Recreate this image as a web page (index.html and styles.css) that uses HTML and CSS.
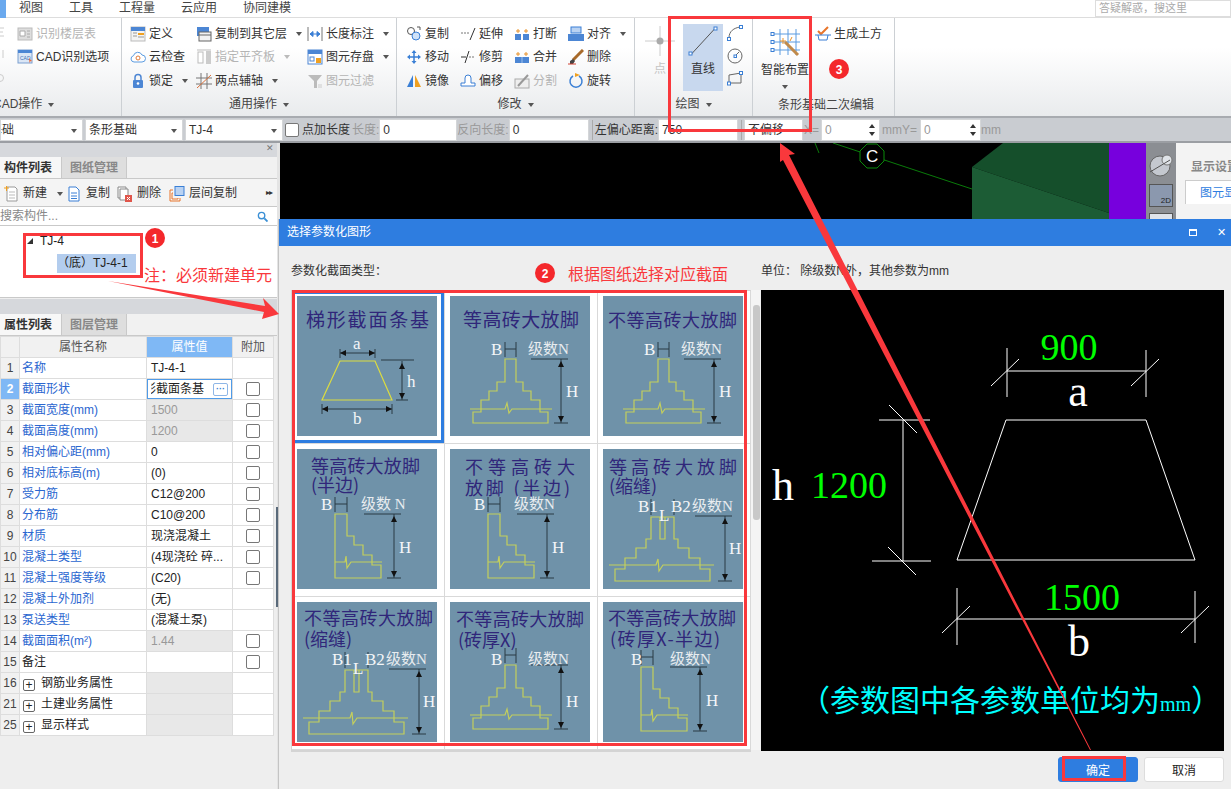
FILE: index.html
```html
<!DOCTYPE html>
<html lang="zh">
<head>
<meta charset="utf-8">
<title>选择参数化图形</title>
<link rel="stylesheet" href="styles.css">
</head>
<body>
<svg class="defs" aria-hidden="true">
  <symbol id="full" viewBox="0 0 140 140">
    <path class="yl" d="M55 63H66V86H73V95H81V104H90V116H98V127H23V116H31V104H39V95H47V86H55Z"/>
    <path class="yl" d="M20 113H55L57 107L59 117L62 113H102"/>
    <path class="dk" d="M55 46V61M66 46V61M55 53H66M81 63H118M111 63V127M104 127H118"/>
    <path class="ar" d="M111 65l-3 6h6zM111 126l-3-6h6z"/>
  </symbol>
  <symbol id="half" viewBox="0 0 140 140">
    <path class="yl" d="M38 65H50V87H57V96H66V106H75V116H84V129H38Z"/>
    <path class="yl" d="M38 113H48L49 107L50 119L54 113H85"/>
    <path class="dk" d="M38 48V63M50 48V63M38 55H50M67 65H104M97 65V129M90 129H104"/>
    <path class="ar" d="M97 67l-3 6h6zM97 128l-3-6h6z"/>
  </symbol>
  <symbol id="joint" viewBox="0 0 140 140">
    <path class="yl" d="M48 68H71V90H75V99H86V109H97V120H107V132H12V120H22V109H33V99H43V90H48Z"/>
    <path class="yl" d="M57 68V90H62V68M6 116H53L55 110L56 122L60 116H111"/>
    <path class="dk" d="M48 50V66M71 50V66M92 67H129M122 67V132M115 132H129"/>
    <path class="ar" d="M122 69l-3 6h6zM122 131l-3-6h6zM55 72l-6 0M64 72h6"/>
  </symbol>
</svg>

<div class="app">
  <nav class="menu">
    <span class="menu-end"></span>
    <span class="m">视图</span><span class="m">工具</span><span class="m">工程量</span><span class="m">云应用</span><span class="m">协同建模</span>
    <span class="help">答疑解惑，搜这里</span>
  </nav>

  <section class="ribbon">
    <div class="grp g1">
      <svg class="edge" viewBox="0 0 5 60"><path d="M0 6h4M0 10h3M0 14h4M3 28v8" stroke="#ccc" fill="none"/><circle cx="0" cy="56" r="3.500" fill="none" stroke="#ccc"/></svg>
      <div class="rows r-cad">
        <div class="it dis"><svg class="i" viewBox="0 0 16 16"><rect x="1" y="2" width="14" height="12" fill="#ddd" stroke="#bbb"/><path d="M3 5h5v5H3zM10 5h3M10 8h3M10 11h3" stroke="#aaa" fill="#fff"/></svg>识别楼层表</div>
        <div class="it"><svg class="i" viewBox="0 0 16 16"><rect x="1" y="1" width="14" height="13" fill="#dbe6f5" stroke="#7a9fd0"/><rect x="1" y="1" width="14" height="3" fill="#4c86d4"/><text class="tiny" x="3" y="11">CAD</text><path d="M12 9l3 3-2 .5-.5 2z" fill="#e96a3a"/></svg>CAD识别选项</div>
      </div>
      <div class="glabel lab-cad">CAD操作<i class="tri"></i></div>
    </div>

    <div class="grp g2">
      <div class="cols">
        <div class="rows w66">
          <div class="it"><svg class="i" viewBox="0 0 16 16"><rect x="1" y="1" width="14" height="14" fill="#f4f4f4" stroke="#bbb"/><rect x="1" y="1" width="14" height="4" fill="#4c86d4"/><path d="M8 7h6v2H8z" fill="#f0a020"/><path d="M3 7h4M3 10h4M8 11h6" stroke="#999"/></svg>定义</div>
          <div class="it"><svg class="i" viewBox="0 0 16 16"><path d="M4 13a3.200 3.200 0 0 1-.5-6.300A4.500 4.500 0 0 1 12 6a3.500 3.500 0 0 1 0 7z" fill="#fff" stroke="#5b9be0"/><circle cx="8" cy="9" r="2" fill="none" stroke="#e07a3a"/></svg>云检查</div>
          <div class="it"><svg class="i" viewBox="0 0 16 16"><path d="M5 7V4.500a3 3 0 0 1 6 0V7" fill="none" stroke="#4c86d4" stroke-width="1.500"/><rect x="3" y="7" width="10" height="8" rx="1" fill="#4c86d4"/><circle cx="8" cy="10.500" r="1.300" fill="#fff"/></svg>锁定<i class="tri"></i></div>
        </div>
        <div class="rows w111">
          <div class="it"><svg class="i" viewBox="0 0 16 16"><rect x="1" y="1" width="12" height="9" fill="#4c86d4"/><rect x="3" y="6" width="12" height="9" fill="#f2f2f2" stroke="#666"/><path d="M3 9h12" stroke="#666"/></svg>复制到其它层<i class="tri"></i></div>
          <div class="it dis"><svg class="i" viewBox="0 0 16 16"><path d="M1 1h14" stroke="#bbb"/><rect x="2" y="3" width="5" height="11" fill="#fff" stroke="#bbb"/><rect x="10" y="2" width="5" height="13" fill="#ccc"/></svg>指定平齐板<i class="tri lt"></i></div>
          <div class="it"><svg class="i" viewBox="0 0 16 16"><path d="M0 5h16M0 11h16M5 0v16M11 0v16" stroke="#777" fill="none"/><path d="M1 15L15 2" stroke="#d9703a"/></svg>两点辅轴<i class="tri"></i></div>
        </div>
        <div class="rows">
          <div class="it"><svg class="i" viewBox="0 0 16 16"><path d="M1 1v14M15 1v14" stroke="#777"/><path d="M3 8h10M3 8l3-2.500v5zM13 8l-3-2.500v5z" stroke="#3a7fd5" fill="#3a7fd5"/></svg>长度标注<i class="tri"></i></div>
          <div class="it"><svg class="i" viewBox="0 0 16 16"><rect x="1" y="1" width="14" height="14" fill="#fff" stroke="#4c86d4"/><rect x="1" y="1" width="14" height="4" fill="#4c86d4"/><rect x="3" y="8" width="4" height="4" fill="none" stroke="#4c86d4"/><rect x="9" y="9" width="5" height="5" fill="#f0a020"/></svg>图元存盘<i class="tri"></i></div>
          <div class="it dis"><svg class="i" viewBox="0 0 16 16"><path d="M1 2h14L10 8v7H7V8z" fill="#bbb"/><path d="M11 12h4M11 14h4" stroke="#ccc"/></svg>图元过滤</div>
        </div>
      </div>
      <div class="glabel">通用操作<i class="tri"></i></div>
    </div>

    <div class="grp g3">
      <div class="cols">
        <div class="rows w54">
          <div class="it"><svg class="i" viewBox="0 0 16 16"><circle cx="5" cy="5" r="3.500" fill="#fff" stroke="#555"/><circle cx="10" cy="10" r="4" fill="#cfe2f8" stroke="#3a7fd5"/><path d="M11 1h3v3" fill="none" stroke="#555"/></svg>复制</div>
          <div class="it"><svg class="i" viewBox="0 0 16 16"><path d="M8 1l2.500 3h-5zM8 15l2.500-3h-5zM1 8l3-2.500v5zM15 8l-3-2.500v5z" fill="#3a7fd5"/><path d="M8 4v8M4 8h8" stroke="#3a7fd5" stroke-width="1.500"/></svg>移动</div>
          <div class="it"><svg class="i" viewBox="0 0 16 16"><path d="M7 2v12H1z" fill="#3a7fd5"/><path d="M9 2v12h6z" fill="#f0a020"/></svg>镜像</div>
        </div>
        <div class="rows w54">
          <div class="it"><svg class="i" viewBox="0 0 16 16"><path d="M1 7h8" stroke="#777" stroke-dasharray="2 1"/><path d="M10 14L15 2" stroke="#333"/></svg>延伸</div>
          <div class="it"><svg class="i" viewBox="0 0 16 16"><path d="M1 8h5" stroke="#333"/><path d="M9 8h6" stroke="#777" stroke-dasharray="2 1"/><path d="M5 14L9 2" stroke="#333"/></svg>修剪</div>
          <div class="it"><svg class="i" viewBox="0 0 16 16"><path d="M1 13V10h4V5a3 3 0 0 1 6 0v5h4v3z" fill="#fff" stroke="#3a7fd5"/></svg>偏移</div>
        </div>
        <div class="rows w54">
          <div class="it"><svg class="i" viewBox="0 0 16 16"><rect x="1" y="8" width="6" height="6" fill="#4c86d4"/><rect x="9" y="8" width="6" height="6" fill="#4c86d4"/><path d="M2 5h4M4 3v4M10 5h4M12 3v4" stroke="#e8922a"/></svg>打断</div>
          <div class="it"><svg class="i" viewBox="0 0 16 16"><rect x="1" y="8" width="14" height="6" fill="#4c86d4"/><path d="M8 8v6" stroke="#9cc0ec"/><path d="M2 5h4M4 3v4M10 5h4M12 3v4" stroke="#e8922a"/></svg>合并</div>
          <div class="it dis"><svg class="i" viewBox="0 0 16 16"><rect x="1" y="6" width="14" height="9" fill="#eee" stroke="#aaa"/><path d="M4 13L14 2" stroke="#999" stroke-width="2"/></svg>分割</div>
        </div>
        <div class="rows">
          <div class="it"><svg class="i" viewBox="0 0 16 16"><rect x="3" y="1" width="10" height="6" fill="#b9d2f2" stroke="#3a7fd5"/><rect x="0" y="8" width="16" height="7" fill="#4c86d4"/></svg>对齐<i class="tri"></i></div>
          <div class="it"><svg class="i" viewBox="0 0 16 16"><path d="M15 1L5 11" stroke="#a86a2a" stroke-width="3"/><path d="M2 12l3-2 2 2-2 3H2z" fill="#444"/><path d="M0 15h8" stroke="#d04030"/></svg>删除</div>
          <div class="it"><svg class="i" viewBox="0 0 16 16"><path d="M5 3a6 6 0 1 0 6 0" fill="none" stroke="#3a7fd5" stroke-width="1.500"/><path d="M7 0l5 2-5 2z" fill="#f0a020"/></svg>旋转</div>
        </div>
      </div>
      <div class="glabel">修改<i class="tri"></i></div>
    </div>

    <div class="grp g4">
      <div class="draw">
        <div class="big pt"><svg class="bi" viewBox="0 0 30 30"><path d="M0 15h30M15 0v30" stroke="#ccc"/><circle cx="15" cy="15" r="3.500" fill="#aaa"/></svg><span>点</span></div>
        <div class="big line"><svg class="bi" viewBox="0 0 30 30"><path d="M3.500 28L26.500 3" stroke="#555"/><rect x="1" y="26" width="3" height="3" fill="#fff" stroke="#3a7fd5"/><rect x="26" y="1" width="3" height="3" fill="#fff" stroke="#3a7fd5"/></svg><span>直线</span></div>
        <div class="small">
          <svg class="i" viewBox="0 0 16 16"><path d="M2 13C2 6 7 3 13 2" fill="none" stroke="#666"/><rect x="0.500" y="12.500" width="3" height="3" fill="#fff" stroke="#3a7fd5"/><rect x="12.500" y="0.500" width="3" height="3" fill="#fff" stroke="#3a7fd5"/></svg>
          <svg class="i" viewBox="0 0 16 16"><circle cx="8" cy="8" r="7" fill="none" stroke="#666"/><path d="M8 8l4-4" stroke="#666"/><rect x="7" y="7" width="2.500" height="2.500" fill="#fff" stroke="#3a7fd5"/></svg>
          <svg class="i" viewBox="0 0 16 16"><path d="M2 5L14 3V13H2Z" fill="none" stroke="#666"/><rect x="0.500" y="12" width="3" height="3" fill="#fff" stroke="#3a7fd5"/><rect x="12.500" y="1.500" width="3" height="3" fill="#fff" stroke="#3a7fd5"/></svg>
        </div>
      </div>
      <div class="glabel">绘图<i class="tri"></i></div>
    </div>

    <div class="grp g5">
      <div class="smart">
        <div class="big sm"><svg class="bi" viewBox="0 0 30 30"><path d="M4 5h26M4 13h26M4 21h26M10 0v26M18 0v26M26 0v26" stroke="#5b9be0" fill="none"/><path d="M15 13l13 13" stroke="#c08a4a" stroke-width="3"/><path d="M13 9v6M10 12h6M22 8l-2 4" stroke="#e8922a"/><rect x="1" y="3.500" width="3" height="3" fill="#fff" stroke="#3a7fd5"/><rect x="1" y="11.500" width="3" height="3" fill="#fff" stroke="#3a7fd5"/><rect x="1" y="19.500" width="3" height="3" fill="#fff" stroke="#3a7fd5"/></svg><span>智能布置</span><i class="tri"></i></div>
        <div class="it earth"><svg class="i" viewBox="0 0 16 16"><path d="M3 5l3 3 7-7" fill="none" stroke="#e8752a" stroke-width="2"/><path d="M0 9h16M3 9l1 5h8l1-5" fill="none" stroke="#3a7fd5"/></svg>生成土方</div>
      </div>
      <div class="glabel lab-strip">条形基础二次编辑</div>
    </div>
  </section>

  <section class="tool">
    <div class="sel s83 cut">基础<i class="tri"></i></div>
    <div class="sel s98">条形基础<i class="tri"></i></div>
    <div class="sel s98">TJ-4<i class="tri"></i></div>
    <span class="cb cb-tool"></span><span class="tl">点加长度</span>
    <span class="tl gray">长度:</span><div class="inp w78">0</div>
    <span class="tl gray">反向长度:</span><div class="inp w80">0</div>
    <span class="sep"></span>
    <span class="tl">左偏心距离:</span><div class="inp w79">750</div>
    <span class="sep"></span>
    <div class="inp w59">不偏移</div>
    <span class="tl gray lx">X=</span><div class="inp w59 gray">0<b class="sp"></b></div>
    <span class="tl gray ly">mmY=</span><div class="inp w61 gray">0<b class="sp"></b></div>
    <span class="tl gray">mm</span>
  </section>

  <main class="main">
    <aside class="left">
      <div class="strip"><span class="x">✕</span></div>
      <div class="tabs"><span class="tab on">构件列表</span><span class="tab">图纸管理</span></div>
      <div class="ltools">
        <span class="lt lt1"><svg class="i" viewBox="0 0 16 16"><path d="M4 1h8l2 2v12H4z" fill="#fff" stroke="#999"/><path d="M6 6h6M6 9h6M6 12h6" stroke="#bbb"/><path d="M1 2h5M3.500 0v5" stroke="#f0a020"/></svg>新建<i class="tri"></i></span>
        <span class="lt lt2"><svg class="i" viewBox="0 0 16 16"><path d="M3 1h7l3 3v11H3z" fill="#fff" stroke="#3a7fd5"/><path d="M5 7h6M5 10h6M5 12.500h6" stroke="#3a7fd5"/></svg>复制</span>
        <span class="lt lt3"><svg class="i" viewBox="0 0 16 16"><path d="M1 1h8v11H1z" fill="#fff" stroke="#888"/><path d="M3 3h8v11H3z" fill="#fff" stroke="#888"/><rect x="8" y="9" width="7" height="7" fill="#e0554a"/><path d="M10 11l3 3M13 11l-3 3" stroke="#fff"/></svg>删除</span>
        <span class="lt lt4"><svg class="i" viewBox="0 0 16 16"><rect x="6" y="0.500" width="9" height="9" fill="#b9d2f2" stroke="#3a7fd5"/><path d="M4 4H1v11h10v-3M4 7H3v6h6v-1" fill="none" stroke="#e8752a"/></svg>层间复制</span>
        <span class="more">▸▸</span>
      </div>
      <div class="search">搜索构件...<svg class="mag" viewBox="0 0 12 12"><circle cx="5" cy="5" r="3.500" fill="none" stroke="#3a8fd5" stroke-width="1.500"/><path d="M8 8l3.500 3.500" stroke="#3a8fd5" stroke-width="2"/></svg></div>
      <div class="tree">
        <div class="tn1"><i class="twist"></i>TJ-4</div>
        <div class="tn2">（底）TJ-4-1</div>
      </div>
      <div class="strip s2"></div>
      <div class="tabs"><span class="tab on">属性列表</span><span class="tab">图层管理</span></div>
      <table class="props">
        <colgroup><col class="c0"><col class="c1"><col class="c2"><col class="c3"></colgroup>
        <thead><tr><th></th><th>属性名称</th><th class="hv">属性值</th><th>附加</th></tr></thead>
        <tbody>
          <tr><td class="n">1</td><td class="b">名称</td><td class="v">TJ-4-1</td><td></td></tr>
          <tr><td class="n act">2</td><td class="b">截面形状</td><td class="v edit"><span class="clip">形截面条基</span><b class="dots">···</b></td><td><span class="cb"></span></td></tr>
          <tr><td class="n">3</td><td class="b">截面宽度(mm)</td><td class="v ro">1500</td><td><span class="cb"></span></td></tr>
          <tr><td class="n">4</td><td class="b">截面高度(mm)</td><td class="v ro">1200</td><td><span class="cb"></span></td></tr>
          <tr><td class="n">5</td><td class="b">相对偏心距(mm)</td><td class="v">0</td><td><span class="cb"></span></td></tr>
          <tr><td class="n">6</td><td class="b">相对底标高(m)</td><td class="v">(0)</td><td><span class="cb"></span></td></tr>
          <tr><td class="n">7</td><td class="b">受力筋</td><td class="v">C12@200</td><td><span class="cb"></span></td></tr>
          <tr><td class="n">8</td><td class="b">分布筋</td><td class="v">C10@200</td><td><span class="cb"></span></td></tr>
          <tr><td class="n">9</td><td class="b">材质</td><td class="v">现浇混凝土</td><td><span class="cb"></span></td></tr>
          <tr><td class="n">10</td><td class="b">混凝土类型</td><td class="v">(4现浇砼 碎...</td><td><span class="cb"></span></td></tr>
          <tr><td class="n">11</td><td class="b">混凝土强度等级</td><td class="v">(C20)</td><td><span class="cb"></span></td></tr>
          <tr><td class="n">12</td><td class="b">混凝土外加剂</td><td class="v">(无)</td><td></td></tr>
          <tr><td class="n">13</td><td class="b">泵送类型</td><td class="v">(混凝土泵)</td><td></td></tr>
          <tr><td class="n">14</td><td class="b">截面面积(m²)</td><td class="v ro">1.44</td><td><span class="cb"></span></td></tr>
          <tr><td class="n">15</td><td>备注</td><td class="v"></td><td><span class="cb"></span></td></tr>
          <tr><td class="n">16</td><td><span class="plus">+</span>钢筋业务属性</td><td class="v ro"></td><td></td></tr>
          <tr><td class="n">21</td><td><span class="plus">+</span>土建业务属性</td><td class="v ro"></td><td></td></tr>
          <tr><td class="n">25</td><td><span class="plus">+</span>显示样式</td><td class="v ro"></td><td></td></tr>
        </tbody>
      </table>
      <i class="thumb"></i>
    </aside>
    <div class="canvas">
      <svg class="scene" viewBox="0 0 866 76" preserveAspectRatio="none">
        <path d="M535 0L539 10M553 0L692 46" stroke="#0a7a0a" fill="none"/>
        <path d="M692 24L723 0H829V70Z" fill="#154f2b"/>
        <path d="M692 24L829 70V76H692Z" fill="#1c5c35"/>
        <rect x="829" width="37" height="76" fill="#7700dd"/>
        <path d="M587 1h10l7 7v10l-7 7h-10l-7-7V8z" fill="#000" stroke="#0a8a0a"/>
        <text class="c-label" x="586" y="19">C</text>
      </svg>
      <div class="vbar">
        <svg class="globe" viewBox="0 0 26 26"><circle cx="12" cy="14" r="10" fill="#c4c8cf" stroke="#666"/><circle cx="19" cy="8" r="5" fill="#dfe3e8" stroke="#777"/><path d="M2 20L22 8" stroke="#555"/></svg>
        <div class="d2">2D</div>
        <div class="d3"></div>
      </div>
      <div class="side">
        <div class="side-h">显示设置</div>
        <div class="side-t">图元显</div>
      </div>
    </div>
  </main>
</div>

<div class="dialog">
  <header class="dtitle"><span>选择参数化图形</span><span class="dctl"><i class="maxi"></i><b class="cl">✕</b></span></header>
  <div class="dbody">
    <div class="dleft">
      <div class="dcap">参数化截面类型：</div>
      <div class="cardwrap">
        <div class="cards">
          <div class="cell sel-c"><svg class="card" viewBox="0 0 140 140">
            <text class="t" x="9" y="31" textLength="123">梯形截面条基</text>
            <path class="yl first" d="M43 65H78L95 104H25Z"/>
            <path class="dk" d="M43 53V62M78 53V62M43 57H78M84 64H117M105 65V104M99 104H111M25 108V118M95 108V118M25 113H95"/>
            <path class="ar" d="M43 57l6-3v6zM78 57l-6-3v6zM105 67l-3 6h6zM105 103l-3-6h6zM25 113l6-3v6zM95 113l-6-3v6z"/>
            <text class="w" x="56" y="53">a</text><text class="w" x="110" y="91">h</text><text class="w" x="56" y="128">b</text>
          </svg></div>
          <div class="cell"><svg class="card" viewBox="0 0 140 140">
            <use href="#full"/>
            <text class="t" x="13" y="31" textLength="116">等高砖大放脚</text>
            <text class="w" x="41" y="59">B</text><text class="w2" x="78" y="58">级数N</text><text class="w" x="116" y="101">H</text>
          </svg></div>
          <div class="cell"><svg class="card" viewBox="0 0 140 140">
            <use href="#full"/>
            <text class="t t2" x="5" y="31" textLength="129">不等高砖大放脚</text>
            <text class="w" x="41" y="59">B</text><text class="w2" x="78" y="58">级数N</text><text class="w" x="116" y="101">H</text>
          </svg></div>
          <div class="cell"><svg class="card" viewBox="0 0 140 140">
            <use href="#half"/>
            <text class="t t2" x="14" y="24" textLength="109">等高砖大放脚</text><text class="t t2" x="14" y="43">(半边)</text>
            <text class="w" x="24" y="61">B</text><text class="w2" x="64" y="60">级数 N</text><text class="w" x="102" y="104">H</text>
          </svg></div>
          <div class="cell"><svg class="card" viewBox="0 0 140 140">
            <use href="#half"/>
            <text class="t t2" x="15" y="25" textLength="110">不等高砖大</text><text class="t t2" x="15" y="46" textLength="105">放脚 (半边)</text>
            <text class="w" x="24" y="61">B</text><text class="w2" x="64" y="60">级数N</text><text class="w" x="102" y="104">H</text>
          </svg></div>
          <div class="cell"><svg class="card" viewBox="0 0 140 140">
            <use href="#joint"/>
            <text class="t t2" x="6" y="25" textLength="128">等高砖大放脚</text><text class="t t2" x="6" y="44">(缩缝)</text>
            <text class="w" x="35" y="63">B1</text><text class="w" x="68" y="63">B2</text><text class="w" x="56" y="72">L</text><text class="w2" x="89" y="62">级数N</text><text class="w" x="126" y="105">H</text>
          </svg></div>
          <div class="cell"><svg class="card" viewBox="0 0 140 140">
            <use href="#joint"/>
            <text class="t t2" x="7" y="23" textLength="129">不等高砖大放脚</text><text class="t t2" x="7" y="44">(缩缝)</text>
            <text class="w" x="35" y="63">B1</text><text class="w" x="68" y="63">B2</text><text class="w" x="56" y="72">L</text><text class="w2" x="89" y="62">级数N</text><text class="w" x="126" y="105">H</text>
          </svg></div>
          <div class="cell"><svg class="card" viewBox="0 0 140 140">
            <use href="#full"/>
            <text class="t t2" x="6" y="24" textLength="128">不等高砖大放脚</text><text class="t t2" x="8" y="45">(砖厚X)</text>
            <text class="w" x="41" y="63">B</text><text class="w2" x="78" y="62">级数N</text><text class="w" x="116" y="105">H</text>
          </svg></div>
          <div class="cell"><svg class="card" viewBox="0 0 140 140">
            <use href="#half"/>
            <text class="t t2" x="5" y="23" textLength="128">不等高砖大放脚</text><text class="t t2" x="7" y="44" textLength="110">(砖厚X-半边)</text>
            <text class="w" x="28" y="63">B</text><text class="w2" x="67" y="62">级数N</text><text class="w" x="103" y="104">H</text>
          </svg></div>
        </div>
        <div class="gridscroll"><i></i></div>
      </div>
    </div>
    <div class="dright">
      <div class="dcap">单位： 除级数N外，其他参数为mm</div>
      <svg class="preview" viewBox="0 0 463 461">
        <path class="pl" d="M245 130H385L434 270H196ZM246 58V107M385 60V107M246 81H385M230 96L258 69M370 96L398 69M118 130H169M142 130V271M128 115L156 143M111 271H170M127 257L155 285M196 298V355M434 301V353M196 329H434M181 343L209 316M420 343L448 316"/>
        <text class="pg" x="308" y="70">900</text>
        <text class="pw" x="317" y="116">a</text>
        <text class="pw" x="22" y="210">h</text>
        <text class="pg" x="88" y="208">1200</text>
        <text class="pg" x="321" y="320">1500</text>
        <text class="pw" x="318" y="366">b</text>
        <text class="pc" x="39" y="421">（参数图中各参数单位均为<tspan class="pm">mm</tspan>）</text>
      </svg>
    </div>
  </div>
  <footer class="dfoot"><button class="btn pri">确定</button><button class="btn">取消</button></footer>
</div>

<svg class="marks" viewBox="0 0 1231 789">
  <g fill="none" stroke="#f9383c" stroke-width="3">
    <rect x="669.500" y="17.500" width="141" height="113"/>
    <rect x="24.500" y="234.500" width="117" height="42"/>
    <rect x="293.500" y="291.500" width="452" height="453"/>
    <rect x="1063.500" y="757.500" width="61" height="22"/>
  </g>
  <path class="ar-red" d="M108 281L265 306L263 298L279 314L262 319L264 312Z"/>
  <path class="ar-red" d="M780 143L795 154L789 155L1091 750L1090 750L783 160L780 162Z"/>
  <g>
    <circle class="dot" cx="155" cy="238" r="10"/><text class="dotn" x="155" y="243">1</text>
    <circle class="dot" cx="545" cy="273" r="10"/><text class="dotn" x="545" y="278">2</text>
    <circle class="dot" cx="839" cy="69" r="10"/><text class="dotn" x="839" y="74">3</text>
  </g>
  <text class="note" x="144" y="281">注：必须新建单元</text>
  <text class="note" x="568" y="280">根据图纸选择对应截面</text>
</svg>
</body>
</html>
```

FILE: styles.css
```css
* { box-sizing: border-box; }
html, body { margin: 0; height: 100%; }
body {
  width: 1231px; height: 789px; overflow: hidden; position: relative;
  font: 12px/1.2 "Liberation Sans", "Noto Sans CJK SC", sans-serif; color: #333; background: #eee;
}
.defs { position: absolute; width: 0; height: 0; }
.app { display: flex; flex-direction: column; height: 789px; }
i { font-style: normal; }

/* menu */
.menu { height: 18px; display: flex; align-items: center; background: #fff; position: relative; border-bottom: 1px solid #ddd; }
.menu-end { width: 6px; height: 18px; background: #6aa9ee; margin-right: 13px; }
.m { margin-right: 26px; color: #444; white-space: nowrap; }
.help { position: absolute; right: 0; top: 0; width: 136px; height: 17px; border: 1px solid #ddd; font-size: 11px; line-height: 15px; color: #aaa; padding-left: 3px; }

/* ribbon */
.ribbon { height: 100px; display: flex; background: linear-gradient(#fff 30%, #e9ebed); border-bottom: 2px solid #a8abb0; flex: none; }
.grp { position: relative; border-right: 1px solid #ccd0d4; padding-top: 4px; flex: none; }
.g1 { width: 122px; } .g2 { width: 275px; } .g3 { width: 238px; } .g4 { width: 118px; } .g5 { width: 142px; }
.cols { display: flex; padding-left: 8px; }
.g3 .cols { padding-left: 9px; }
.rows { display: flex; flex-direction: column; }
.r-cad { padding-left: 17px; }
.edge { position: absolute; left: 0; top: 4px; width: 5px; height: 60px; }
.w66 { width: 66px; } .w111 { width: 111px; } .w54 { width: 54px; }
.it { height: 23.500px; display: flex; align-items: center; gap: 3px; white-space: nowrap; color: #333; }
.it.dis { color: #b4b4b4; }
.i { width: 16px; height: 16px; flex: none; }
.tiny { font-size: 5px; fill: #3a6fb5; }
.tri { display: inline-block; width: 0; height: 0; border: 3.500px solid transparent; border-top: 4px solid #555; border-bottom: 0; margin-left: 6px; vertical-align: middle; }
.tri.lt { border-top-color: #bbb; }
.glabel { position: absolute; left: 0; right: 0; top: 79px; text-align: center; color: #444; white-space: nowrap; }
.lab-cad { text-align: left; left: -7px; }
.lab-strip { left: 25px; right: auto; top: 80px; }

.draw { display: flex; padding-left: 10px; margin-top: 2px; }
.big { display: flex; flex-direction: column; align-items: center; }
.pt { width: 30px; color: #c4c4c4; margin-right: 8px; padding-top: 2px; gap: 6px; }
.line { width: 40px; height: 67px; background: #c8d8ee; padding-top: 2px; gap: 6px; margin-right: 4px; }
.bi { width: 30px; height: 30px; flex: none; }
.small { display: flex; flex-direction: column; gap: 6.500px; padding-top: 1px; }
.smart { display: flex; padding-left: 7px; }
.sm { width: 50px; padding-top: 7px; gap: 4px; }
.sm .tri { margin: 4px 0 0; }
.earth { margin-left: 5px; }

/* tool bar */
.tool { height: 25px; flex: none; display: flex; align-items: center; background: #c9ccd1; border-bottom: 2px solid #9b9ea3; padding-top: 1px; color: #333; white-space: nowrap; }
.sel, .inp { height: 22px; background: #fff; border: 1px solid #d4d6d8; line-height: 20px; padding-left: 3px; position: relative; flex: none; }
.sel { margin-right: 2px; }
.sel .tri { position: absolute; right: 5px; top: 9px; margin: 0; }
.cut { text-indent: -14px; overflow: hidden; }
.s83 { width: 83px; } .s98 { width: 98px; }
.cb { display: inline-block; width: 14px; height: 14px; border: 1px solid #777; border-radius: 2px; background: #fff; }
.cb-tool { flex: none; margin-right: 3px; }
.tl { flex: none; }
.tl + .tl { margin-left: 2px; }
.lx { width: 18px; padding-left: 1px; }
.ly { width: 40px; padding-left: 2px; }
.gray { color: #999; }
.sep { width: 1px; height: 20px; background: #aaa; margin: 0 2px 0 3px; flex: none; }
.w78 { width: 78px; } .w80 { width: 80px; } .w79 { width: 80px; } .w59 { width: 59px; } .w61 { width: 61px; }
.sp { position: absolute; right: 3px; top: 4px; width: 7px; height: 12px; }
.sp::before, .sp::after { content: ""; position: absolute; left: 0; width: 0; height: 0; border: 3.500px solid transparent; }
.sp::before { top: 0; border-top: 0; border-bottom: 4px solid #333; }
.sp::after { bottom: 0; border-bottom: 0; border-top: 4px solid #333; }

/* main */
.main { flex: 1; display: flex; min-height: 0; }
.left { width: 280px; flex: none; background: #eee; display: flex; flex-direction: column; border-right: 3px solid #e4e4e4; position: relative; }
.thumb { position: absolute; left: 276px; top: 364px; width: 3px; height: 100px; background: #5a6a7a; }
.strip { height: 14px; background: #d6d8dc; position: relative; flex: none; }
.s2 { height: 15px; margin-top: 1px; }
.x { position: absolute; right: 3px; top: 0; font-size: 9px; color: #777; }
.tabs { height: 22px; display: flex; flex: none; background: #f1f1f1; border-bottom: 1px solid #c9c9c9; }
.tab { padding: 4px 0 0 4px; width: 62px; color: #888; font-weight: 700; background: #dedede; border-right: 1px solid #c9c9c9; height: 21px; }
.tab + .tab { width: 65px; padding-left: 8px; }
.tab.on { background: #f7f7f7; color: #333; }
.ltools { height: 28px; background: #f4f4f4; border-bottom: 1px solid #c9c9c9; display: flex; align-items: center; position: relative; flex: none; padding-top: 2px; }
.lt { display: flex; align-items: center; gap: 4px; white-space: nowrap; }
.lt1 { margin-left: 3px; width: 63px; } .lt2 { width: 51px; } .lt3 { width: 52px; }
.more { position: absolute; right: 5px; top: 9px; font-size: 8px; letter-spacing: -1px; color: #333; }
.search { height: 19px; background: #fff; border-bottom: 1px solid #c9c9c9; color: #888; line-height: 19px; position: relative; flex: none; }
.mag { position: absolute; right: 9px; top: 4px; width: 11px; height: 11px; }
.tree { height: 72px; background: #fff; flex: none; padding: 8px 0 0 27px; border-bottom: 1px solid #c9c9c9; }
.tn1 { height: 14px; display: flex; align-items: center; color: #222; }
.twist { width: 0; height: 0; border-left: 6px solid transparent; border-bottom: 6px solid #333; margin-right: 7px; }
.tn2 { margin: 6px 0 0 30px; width: 79px; height: 19px; background: #b3cdee; line-height: 19px; white-space: nowrap; color: #222; }
.props { border-collapse: collapse; table-layout: fixed; width: 273px; background: #fff; }
.c0 { width: 19px; } .c1 { width: 127px; } .c2 { width: 86px; } .c3 { width: 41px; }
.props th, .props td { height: 21px; padding: 0; border: 1px solid #ddd; white-space: nowrap; overflow: hidden; }
.props th { background: #f1f1f1; font-weight: 400; color: #555; }
.props td { padding-left: 2px; color: #222; }
.props td:last-child { padding: 0; text-align: center; line-height: 0; vertical-align: middle; }
.props th.hv { background: #7fb8f5; color: #fff; }
.props td.n { background: #f1f1f1; color: #444; font-size: 12px; padding: 0; text-align: center; }
.props td.act { background: #7fb8f5; color: #fff; font-weight: 700; }
.props td.b { color: #2a66d0; }
.props td.v { padding-left: 4px; }
.props td.ro { background: #e8e8e8; color: #999; }
.props td.edit { box-shadow: inset 0 0 0 1px #4f9be8; position: relative; }
.clip { display: block; width: 60px; overflow: hidden; text-indent: -7px; }
.dots { position: absolute; right: 4px; top: 4px; width: 15px; height: 13px; border: 1px solid #8fb6e6; border-radius: 2px; color: #3a7fd5; font-size: 9px; line-height: 10px; text-align: center; }
.plus { display: inline-block; width: 12px; height: 12px; border: 1px solid #666; border-radius: 2px; margin: 0 6px 0 1px; line-height: 10px; text-align: center; vertical-align: -2px; }

.canvas { flex: 1; position: relative; background: #000; display: flex; min-width: 0; }
.scene { flex: 1; height: 76px; min-width: 0; display: block; }
.c-label { font-size: 17px; fill: #fff; }
.vbar { width: 30px; height: 76px; background: #8b8e93; flex: none; padding: 9px 2px 0; overflow: hidden; }
.globe { width: 26px; height: 26px; display: block; }
.d2 { margin: 6px 0 0 1px; width: 24px; height: 23px; background: #8b98ae; border: 1px solid #555; font-size: 8px; text-align: right; padding: 11px 1px 0 0; color: #222; }
.d3 { margin: 6px 0 0 1px; width: 24px; height: 12px; background: #dfe3ea; border: 1px solid #555; }
.side { width: 55px; background: #f3f3f3; flex: none; overflow: hidden; height: 76px; }
.side-h { margin: 17px 0 0 15px; font-weight: 700; color: #888; white-space: nowrap; }
.side-t { margin: 6px 0 0 9px; padding: 5px 0 0 14px; height: 24px; background: #fff; border: 1px solid #ccc; border-bottom: 0; color: #2e7de0; white-space: nowrap; width: 70px; }

/* dialog */
.dialog { position: absolute; left: 278px; top: 219px; width: 953px; height: 570px; background: #eee; display: flex; flex-direction: column; border-left: 1px solid #c4c4c4; }
.dtitle { height: 27px; background: #2e7de0; color: #fff; display: flex; align-items: center; justify-content: space-between; padding-left: 8px; flex: none; }
.dctl { display: flex; align-items: center; gap: 20px; padding-right: 5px; }
.maxi { width: 8px; height: 7px; border: 1px solid #fff; border-top-width: 2px; }
.cl { font-weight: 400; font-size: 11px; }
.dbody { display: flex; flex: 1; min-height: 0; padding-left: 12px; }
.dleft { width: 470px; flex: none; }
.dcap { height: 44px; padding-top: 18px; color: #333; white-space: nowrap; }
.dright { width: 463px; flex: none; }
.preview { width: 463px; height: 461px; display: block; background: #000; }
.cardwrap { display: flex; align-items: flex-start; }
.cards { display: grid; grid-template-columns: repeat(3, 153px); grid-auto-rows: 153px; width: 460px; border: 1px solid #d4d4d4; border-width: 1px 1px 2px 1px; background: #fff; }
.cell { border-right: 1px solid #d9d9d9; border-bottom: 1px solid #d9d9d9; padding: 5px 0 0 5px; }
.sel-c { box-shadow: inset 0 0 0 3px #2e7de0; }
.card { width: 140px; height: 140px; display: block; background: #6f92a9; }
.gridscroll { width: 9px; height: 460px; background: #f4f4f4; }
.gridscroll i { display: block; width: 7px; height: 215px; margin: 15px 0 0 2px; background: #c8c8c8; border-radius: 3px; }
.t { font: 19px "Noto Sans CJK SC", sans-serif; fill: #30267a; }
.t2 { font-size: 18px; }
.w { font: 17px "Liberation Serif", serif; fill: #f4f6f8; }
.w2 { font: 15px "Liberation Serif", "Noto Sans CJK SC", serif; fill: #e8ecef; }
.yl { fill: none; stroke: #c4cf5c; stroke-width: 1.200; }
.yl.first { stroke: #dcdc40; }
.dk { fill: none; stroke: #2b3a44; stroke-width: 1; }
.ar { fill: #111; }
.pl { fill: none; stroke: #fff; stroke-width: 1; }
.pg { font: 38px "Liberation Serif", serif; fill: #00ff00; text-anchor: middle; }
.pw { font: 44px "Liberation Serif", serif; fill: #fff; text-anchor: middle; }
.pc { font: 30px "Liberation Serif", "Noto Sans CJK SC", serif; fill: #00ffff; }
.pm { font-size: 20px; }
.dfoot { height: 38px; flex: none; display: flex; justify-content: flex-end; gap: 6px; padding: 6px 7px 0 0; }
.btn { width: 80px; height: 25px; border: 1px solid #ddd; border-radius: 3px; background: #fff; font: 12px "Noto Sans CJK SC", sans-serif; color: #222; padding: 0; }
.btn.pri { background: #2e7de0; border-color: #2e7de0; color: #fff; }

/* annotations */
.marks { position: absolute; left: 0; top: 0; width: 1231px; height: 789px; pointer-events: none; }
.ar-red { fill: #f9383c; }
.dot { fill: #f4282c; }
.dotn { font: 700 12px "Liberation Sans", sans-serif; fill: #fff; text-anchor: middle; }
.note { font: 16px "Noto Sans CJK SC", sans-serif; fill: #f9383c; }
```
